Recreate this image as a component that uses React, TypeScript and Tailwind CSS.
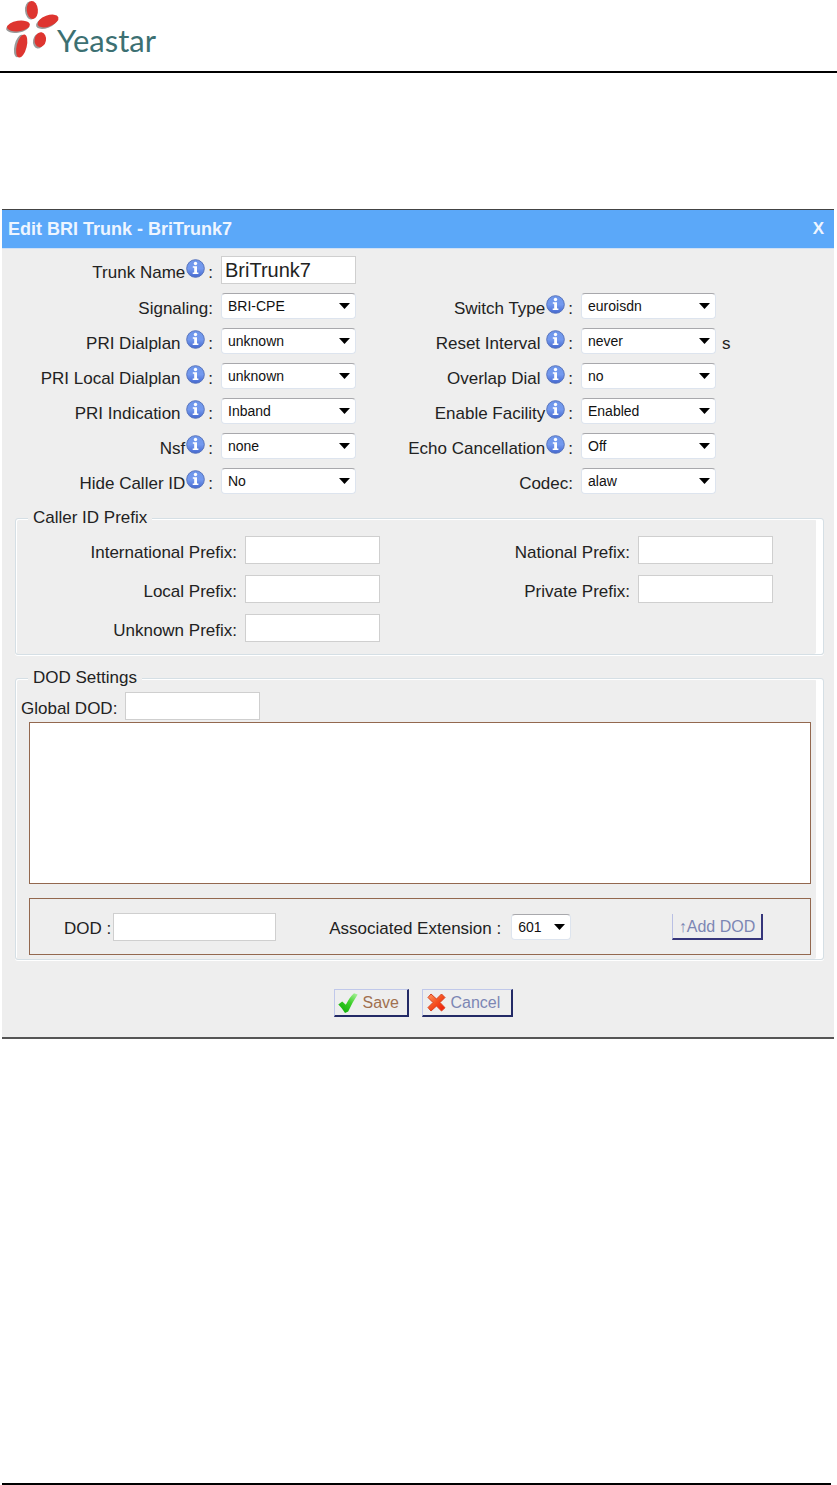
import React, { Fragment } from "react";

type SelectProps = {
  id: string;
  value: string;
};

type TextBoxProps = {
  id: string;
  value?: string;
};

type FieldItem = {
  id: string;
  label: string;
  value?: string;
  info?: boolean;
  right?: boolean;
  text?: boolean;
  suffix?: string;
};

const trunkFields: FieldItem[] = [
  { id: "trunk-name", label: "Trunk Name", value: "BriTrunk7", info: true, text: true },
  { id: "signaling", label: "Signaling", value: "BRI-CPE" },
  { id: "switch-type", label: "Switch Type", value: "euroisdn", info: true, right: true },
  { id: "dialplan", label: "PRI Dialplan ", value: "unknown", info: true },
  { id: "reset-interval", label: "Reset Interval ", value: "never", info: true, right: true, suffix: "s" },
  { id: "local-dialplan", label: "PRI Local Dialplan ", value: "unknown", info: true },
  { id: "overlap-dial", label: "Overlap Dial ", value: "no", info: true, right: true },
  { id: "indication", label: "PRI Indication ", value: "Inband", info: true },
  { id: "facility", label: "Enable Facility", value: "Enabled", info: true, right: true },
  { id: "nsf", label: "Nsf", value: "none", info: true },
  { id: "echo", label: "Echo Cancellation", value: "Off", info: true, right: true },
  { id: "hide-caller", label: "Hide Caller ID", value: "No", info: true },
  { id: "codec", label: "Codec", value: "alaw", right: true },
];

const prefixFields: FieldItem[] = [
  { id: "international", label: "International Prefix", text: true },
  { id: "national", label: "National Prefix", text: true, right: true },
  { id: "local", label: "Local Prefix", text: true },
  { id: "private", label: "Private Prefix", text: true, right: true },
  { id: "unknown", label: "Unknown Prefix", text: true },
];

function Logo() {
  return (
    <div className="flex items-start">
      <svg className="-mr-1" width="61" height="60" viewBox="0 0 61 60" aria-hidden="true">
        <g fill="#9a9a9a">
          <ellipse cx="30.500" cy="10.500" rx="5.500" ry="9" transform="rotate(-5 30.500 10.500)" />
          <ellipse cx="46.500" cy="22.500" rx="11" ry="5.500" transform="rotate(-20 46.500 22.500)" />
          <ellipse cx="17.500" cy="27.500" rx="11.500" ry="5.200" transform="rotate(-8 17.500 27.500)" />
          <ellipse cx="38.500" cy="41" rx="5.500" ry="7.500" transform="rotate(10 38.500 41)" />
          <ellipse cx="19.500" cy="46" rx="5" ry="11.500" transform="rotate(14 19.500 46)" />
        </g>
        <g fill="#de3530">
          <ellipse cx="32.300" cy="10" rx="5.600" ry="9" transform="rotate(-5 32.300 10)" />
          <ellipse cx="48" cy="21" rx="11" ry="5.500" transform="rotate(-20 48 21)" />
          <ellipse cx="18.500" cy="26" rx="11.500" ry="5.200" transform="rotate(-8 18.500 26)" />
          <ellipse cx="40.300" cy="39.700" rx="5.700" ry="7.500" transform="rotate(10 40.300 39.700)" />
          <ellipse cx="21.700" cy="46" rx="5" ry="11.800" transform="rotate(14 21.700 46)" />
        </g>
      </svg>
      <span className="pt-5 font-['Lato',sans-serif] text-[31px] leading-10 text-[#3c7072]">Yeastar</span>
    </div>
  );
}

function InfoIcon() {
  return (
    <svg className="-mt-1 ml-px mr-[3px] inline align-baseline" width="19" height="19" viewBox="0 0 19 19" aria-hidden="true">
      <defs>
        <linearGradient id="info-blue" x1="0" y1="0" x2="0" y2="1">
          <stop offset="0" stopColor="#6d96ea" />
          <stop offset="0.5" stopColor="#7499ee" />
          <stop offset="1" stopColor="#4468d0" />
        </linearGradient>
      </defs>
      <circle cx="9.500" cy="9.500" r="8.800" fill="url(#info-blue)" stroke="#5673bd" strokeWidth="1" />
      <circle cx="9.500" cy="4.500" r="1.700" fill="#fff" />
      <path d="M6.800 7.300h4.200v6.200h1.400v1.500H6.700v-1.500h1.500V8.800H6.800z" fill="#fff" />
    </svg>
  );
}

function CheckIcon() {
  return (
    <svg width="20" height="20" viewBox="0 0 20 20" aria-hidden="true">
      <defs>
        <linearGradient id="check-green" x1="1" y1="0" x2="0.300" y2="1">
          <stop offset="0" stopColor="#b4f5a4" />
          <stop offset="0.500" stopColor="#3fd02c" />
          <stop offset="1" stopColor="#12b00a" />
        </linearGradient>
      </defs>
      <path d="M0.300 11.500 4.200 8.600l3.600 3.200C10 7.500 12.500 3.200 16 0.200l3.700 1.300C16 7 13 12.500 10.200 18.600L7 19.900C5 16.800 3 14 0.300 11.500z" fill="url(#check-green)" />
    </svg>
  );
}

function CrossIcon() {
  return (
    <svg width="19" height="19" viewBox="0 0 19 19" aria-hidden="true">
      <defs>
        <linearGradient id="cross-red" x1="0" y1="0" x2="1" y2="1">
          <stop offset="0" stopColor="#ff9a62" />
          <stop offset="0.500" stopColor="#f4501f" />
          <stop offset="1" stopColor="#f01508" />
        </linearGradient>
      </defs>
      <path d="M4 1 9.500 6 14.500 1l3.500 3.500-5 5 5 5.200-3.500 3.300-5-5-5.500 5L1 14.500l5-5-5-5z" fill="url(#cross-red)" stroke="#d9401f" strokeWidth="1" strokeLinejoin="round" />
    </svg>
  );
}

function TextBox({ id, value }: TextBoxProps) {
  return (
    <input
      id={id}
      type="text"
      defaultValue={value}
      className="h-7 w-full border border-[#cfcfcf] bg-white px-[3px] text-xl leading-6 text-[#222]"
    />
  );
}

function Select({ id, value }: SelectProps) {
  return (
    <div className="relative w-full">
      <select
        id={id}
        defaultValue={value}
        className="block h-[26px] w-full appearance-none rounded-sm border border-[#dde4ee] border-t-[#a8a8ac] bg-white pl-[6px] pr-4 text-sm text-[#111]"
      >
        <option>{value}</option>
      </select>
      <svg className="pointer-events-none absolute right-[6px] top-[10px]" width="11" height="6" viewBox="0 0 11 6" aria-hidden="true">
        <path d="M0 0h11L5.500 6z" fill="#000" />
      </svg>
    </div>
  );
}

function Fields({ items }: { items: FieldItem[] }) {
  return (
    <>
      {items.map((item) => (
        <Fragment key={item.id}>
          <label
            htmlFor={item.id}
            className={`${item.right ? "col-start-3" : "col-start-1"} whitespace-pre pr-2 pt-[6px] text-right`}
          >
            {item.label}
            {item.info && <InfoIcon />}:
          </label>
          {item.text ? <TextBox id={item.id} value={item.value} /> : <Select id={item.id} value={item.value ?? ""} />}
          {item.suffix && <span className="pl-[6px] pt-[6px]">{item.suffix}</span>}
        </Fragment>
      ))}
    </>
  );
}

const fieldsetClass =
  "rounded-[3px] border border-[#d5dfe5] shadow-[inset_1px_1px_0_#fff,inset_-7px_0_0_#fff,0_1px_0_#fff]";

function App() {
  return (
    <div className="flex min-h-screen flex-col bg-white font-['Liberation_Sans',sans-serif] text-[17px] leading-5 text-[#222]">
      <header className="h-[73px] border-b-2 border-black">
        <Logo />
      </header>

      <main className="mb-8 ml-[2px] mr-[3px] mt-[136px] border-b-2 border-t border-b-[#555] border-t-[#444] bg-[#eee]">
        <div className="flex h-[39px] items-center justify-between border-b border-[#cfe0f5] bg-[#5ba8f9] pl-[6px] pr-[10px] font-bold text-[#eef5ff]">
          <h1 className="text-lg">Edit BRI Trunk - BriTrunk7</h1>
          <button type="button" aria-label="Close">
            X
          </button>
        </div>

        <form>
          <div className="grid grid-cols-[219px_135px_1fr_135px_118px] items-center gap-y-[9px] pt-[7px]">
            <Fields items={trunkFields} />
          </div>

          <fieldset className={`${fieldsetClass} ml-[13px] mr-[10px] mt-[14px] pb-3`}>
            <legend className="ml-3 bg-[#eee] px-[5px]">Caller ID Prefix</legend>
            <div className="grid grid-cols-[229px_135px_1fr_135px_50px] items-center gap-y-[11px] pt-2">
              <Fields items={prefixFields} />
            </div>
          </fieldset>

          <fieldset className={`${fieldsetClass} ml-[13px] mr-[10px] mt-[13px] pb-1`}>
            <legend className="ml-3 bg-[#eee] px-[5px]">DOD Settings</legend>
            <div className="flex items-center pl-[5px] pt-1">
              <label htmlFor="global-dod" className="pr-2 pt-[6px]">
                Global DOD:
              </label>
              <div className="w-[135px]">
                <TextBox id="global-dod" />
              </div>
            </div>
            <div className="ml-[13px] mr-3 mt-[2px] h-[162px] border border-[#93684f] bg-white"></div>
            <div className="ml-[13px] mr-3 mt-[14px] flex h-[57px] items-center border border-[#93684f] pl-[34px]">
              <label htmlFor="dod" className="pr-[2px] pt-1">
                DOD :
              </label>
              <div className="w-[163px]">
                <TextBox id="dod" />
              </div>
              <label htmlFor="extension" className="pl-[53px] pr-[10px] pt-1">
                Associated Extension :
              </label>
              <div className="w-[60px]">
                <Select id="extension" value="601" />
              </div>
              <button
                type="button"
                className="ml-auto mr-[47px] h-[26px] w-[91px] border-b-2 border-l border-r-2 border-b-[#35357a] border-l-[#b9c0e4] border-r-[#35357a] pt-[3px] text-base leading-5 text-[#7c86b4]"
              >
                ↑Add DOD
              </button>
            </div>
          </fieldset>

          <div className="flex justify-center gap-[13px] pb-5 pl-[10px] pt-[29px] text-base">
            <button
              type="button"
              className="flex h-7 w-[75px] items-center gap-[5px] border border-b-2 border-r-2 border-[#c0c8ea] border-b-[#232a66] border-r-[#232a66] pl-[3px] text-[#a0704f]"
            >
              <CheckIcon />
              Save
            </button>
            <button
              type="button"
              className="flex h-7 w-[91px] items-center gap-[5px] border border-b-2 border-r-2 border-[#c0c8ea] border-b-[#232a66] border-r-[#232a66] pl-1 text-[#7c86b4]"
            >
              <CrossIcon />
              Cancel
            </button>
          </div>
        </form>
      </main>

      <footer className="ml-[2px] mr-[6px] mt-auto border-t-2 border-black"></footer>
    </div>
  );
}

export default App;
